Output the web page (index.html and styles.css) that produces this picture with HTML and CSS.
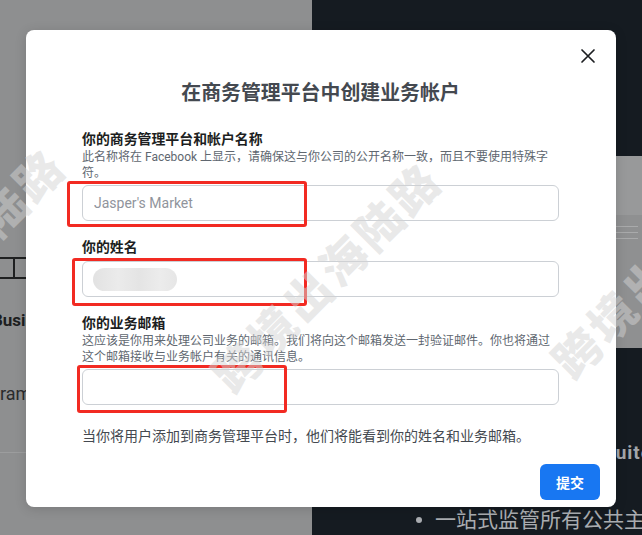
FILE: index.html
```html
<!DOCTYPE html>
<html lang="zh-CN">
<head>
    <meta charset="UTF-8">
    <meta name="viewport" content="width=device-width, initial-scale=1.0">
    <title>创建业务帐户</title>
    <link rel="stylesheet" href="styles.css">
</head>
<body>
    <div class="page">
        <div class="left-panel">
            <div class="left-glyph"><span></span></div>
            <div class="left-title">Business</div>
            <div class="left-text">Instagram</div>
            <div class="left-rule"></div>
        </div>
        <div class="right-panel">
            <div class="preview-block">
                <div class="preview-head"></div>
                <div class="preview-lines"><span></span><span></span><span></span></div>
                <div class="preview-dot"></div>
            </div>
            <div class="right-title">Meta Business Suite</div>
            <div class="right-list"><span class="bullet"></span>一站式监管所有公共主页和帐户</div>
        </div>
    </div>

    <div class="modal">
        <button class="modal-close" aria-label="关闭">
            <svg width="24" height="24" viewBox="0 0 24 24">
                <path d="M6 6 L18 18 M18 6 L6 18" stroke="#1c1e21" stroke-width="1.7" stroke-linecap="round" fill="none"/>
            </svg>
        </button>
        <h2 class="modal-title">在商务管理平台中创建业务帐户</h2>

        <div class="field field-first">
            <label class="field-label">你的商务管理平台和帐户名称</label>
            <p class="field-help">此名称将在 Facebook 上显示，请确保这与你公司的公开名称一致，而且不要使用特殊字符。</p>
            <div class="input-box"><input type="text" placeholder="Jasper's Market"></div>
        </div>

        <div class="field">
            <label class="field-label">你的姓名</label>
            <div class="input-box"><span class="blur-name"></span></div>
        </div>

        <div class="field">
            <label class="field-label">你的业务邮箱</label>
            <p class="field-help">这应该是你用来处理公司业务的邮箱。我们将向这个邮箱发送一封验证邮件。你也将通过这个邮箱接收与业务帐户有关的通讯信息。</p>
            <div class="input-box"><input type="email"></div>
        </div>

        <p class="modal-note">当你将用户添加到商务管理平台时，他们将能看到你的姓名和业务邮箱。</p>
        <div class="modal-actions">
            <button class="submit-button">提交</button>
        </div>

        <div class="mark mark-name"></div>
        <div class="mark mark-person"></div>
        <div class="mark mark-email"></div>
    </div>

    <div class="watermark wm-left">跨境出海陆路</div>
    <div class="watermark wm-center">跨境出海陆路</div>
    <div class="watermark wm-right">跨境出海陆路</div>
</body>
</html>
```

FILE: styles.css
```css
body {
    margin: 0;
    padding: 0;
    width: 642px;
    height: 535px;
    overflow: hidden;
    position: relative;
    background-color: #151b21;
    font-family: Roboto, "Noto Sans CJK SC", sans-serif;
}
.page {
    display: flex;
    height: 535px;
}

/* dimmed page behind the dialog */
.left-panel {
    width: 312px;
    flex-shrink: 0;
    background-color: #8e8f90;
    display: flex;
    flex-direction: column;
    overflow: hidden;
}
.left-glyph {
    margin-top: 257px;
    width: 40px;
    height: 18px;
    border-top: 2px solid #1f2021;
    border-bottom: 2px solid #1f2021;
}
.left-glyph span {
    display: block;
    margin-left: 13px;
    width: 2px;
    height: 18px;
    background-color: #1f2021;
}
.left-title {
    margin-top: 29px;
    margin-left: -8px;
    font-size: 17px;
    font-weight: bold;
    line-height: 24px;
    color: #1d1e20;
    white-space: nowrap;
}
.left-text {
    margin-top: 50px;
    margin-left: -50px;
    font-size: 18px;
    line-height: 24px;
    color: #2a2b2c;
    white-space: nowrap;
}
.left-rule {
    margin-top: 46px;
    height: 1px;
    background-color: #9c9d9e;
}

.right-panel {
    flex: 1;
    display: flex;
    flex-direction: column;
    overflow: hidden;
}
.preview-block {
    margin-top: 156px;
    margin-left: 130px;
    height: 209px;
    background-color: #8f9091;
    position: relative;
    overflow: hidden;
}
.preview-head {
    height: 59px;
    background-color: #98999a;
}
.preview-lines {
    display: flex;
    flex-direction: column;
    gap: 5px;
    margin-top: 11px;
    margin-left: 174px;
    width: 22px;
}
.preview-lines span {
    display: block;
    height: 1px;
    background-color: #a9aaab;
}
.preview-dot {
    position: absolute;
    left: 142px;
    top: 188px;
    width: 36px;
    height: 36px;
    border-radius: 50%;
    background-color: #2f6b3d;
}
.right-title {
    margin-top: 95px;
    margin-right: -10px;
    text-align: right;
    font-size: 19px;
    font-weight: bold;
    letter-spacing: 1px;
    line-height: 20px;
    color: #a3a6aa;
    white-space: nowrap;
}
.right-list {
    margin-top: 42px;
    padding-left: 104px;
    font-size: 21px;
    line-height: 30px;
    color: #a9acb0;
    white-space: nowrap;
    display: flex;
    align-items: center;
}
.bullet {
    display: block;
    flex-shrink: 0;
    width: 6px;
    height: 6px;
    border-radius: 50%;
    background-color: #a9acb0;
    margin-right: 13px;
}

/* dialog */
.modal {
    position: absolute;
    left: 26px;
    top: 30px;
    width: 590px;
    box-sizing: border-box;
    padding: 0 57px 7px 56px;
    background-color: #ffffff;
    border-radius: 8px;
    box-shadow: 0 2px 12px rgba(0, 0, 0, 0.15);
}
.modal-close {
    position: absolute;
    top: 14px;
    right: 16px;
    width: 24px;
    height: 24px;
    padding: 0;
    border: none;
    background: none;
    cursor: pointer;
}
.modal-close svg {
    display: block;
}
.modal-title {
    margin: 52px 0 0;
    font-size: 19.9px;
    line-height: 24px;
    font-weight: bold;
    color: #444950;
    text-align: center;
}
.field {
    margin-top: 16px;
}
.field-first {
    margin-top: 23px;
}
.field-label {
    display: block;
    font-size: 13.9px;
    line-height: 20px;
    font-weight: bold;
    color: #1c1e21;
}
.field-help {
    margin: 1px 0;
    font-size: 12px;
    line-height: 15.5px;
    color: #606770;
}
.input-box {
    margin-top: 4px;
    height: 36px;
    box-sizing: border-box;
    border: 1px solid #ccd0d5;
    border-radius: 6px;
    display: flex;
    align-items: center;
    padding: 0 11px;
}
.input-box input {
    border: none;
    outline: none;
    flex: 1;
    padding: 0;
    font-family: Roboto, "Noto Sans CJK SC", sans-serif;
    font-size: 14px;
    color: #1c1e21;
    background: transparent;
}
.input-box input::placeholder {
    color: #90949c;
}
.blur-name {
    display: block;
    width: 84px;
    height: 23px;
    margin-left: -1px;
    border-radius: 12px;
    background: linear-gradient(90deg, #e2e2e2 0%, #ebebeb 30%, #e4e4e4 55%, #ececec 80%, #e6e6e6 100%);
    filter: blur(0.6px);
}
.modal-note {
    margin: 21px 0 0;
    font-size: 14px;
    line-height: 20px;
    color: #444950;
}
.modal-actions {
    margin-top: 18px;
    display: flex;
    justify-content: flex-end;
    margin-right: -41px;
}
.submit-button {
    width: 60px;
    height: 36px;
    border: none;
    border-radius: 6px;
    background-color: #1877f2;
    color: #ffffff;
    font-family: Roboto, "Noto Sans CJK SC", sans-serif;
    font-size: 14px;
    font-weight: bold;
    cursor: pointer;
}

/* red annotation boxes */
.mark {
    position: absolute;
    border: 3px solid #f22a22;
    border-radius: 3px;
    box-sizing: border-box;
}
.mark-name {
    left: 41px;
    top: 151px;
    width: 240px;
    height: 46px;
}
.mark-person {
    left: 46px;
    top: 228px;
    width: 235px;
    height: 48px;
}
.mark-email {
    left: 51px;
    top: 335px;
    width: 210px;
    height: 48px;
}

/* watermark overlay */
.watermark {
    position: absolute;
    width: 320px;
    line-height: 50px;
    text-align: center;
    font-size: 46px;
    font-weight: 900;
    letter-spacing: 4px;
    color: rgba(211, 211, 211, 0.5);
    transform: rotate(-45deg);
    pointer-events: none;
    white-space: nowrap;
}
.wm-center {
    left: 168px;
    top: 253px;
}
.wm-left {
    left: -208px;
    top: 239px;
}
.wm-right {
    left: 508px;
    top: 239px;
}
```
